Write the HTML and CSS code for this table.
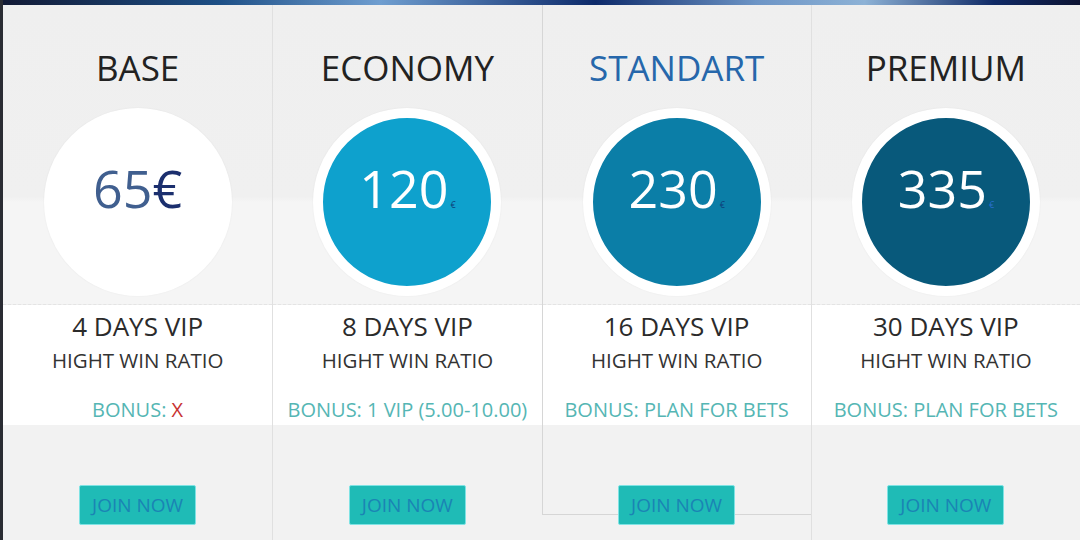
FILE: index.html
```html
<!DOCTYPE html>
<html lang="en">
<head>
  <meta charset="UTF-8" />
  <meta name="viewport" content="width=device-width, initial-scale=1.0"/>
  <title>VIP Plans</title>
  <link rel="stylesheet" href="styles.css">
</head>
<body>
  <div class="frame">
    <div class="plans">

      <div class="plan">
        <div class="plan-head">
          <h2 class="plan-title">BASE</h2>
          <div class="price price-base"><span class="amount">65<span class="cur">€</span></span></div>
        </div>
        <div class="plan-info">
          <div class="days">4 DAYS VIP</div>
          <div class="ratio">HIGHT WIN RATIO</div>
          <div class="bonus">BONUS: <span class="no">X</span></div>
        </div>
        <div class="plan-foot">
          <button class="join">JOIN NOW</button>
        </div>
      </div>

      <div class="plan">
        <div class="plan-head">
          <h2 class="plan-title">ECONOMY</h2>
          <div class="price price-economy"><span class="amount">120<span class="cur">€</span></span></div>
        </div>
        <div class="plan-info">
          <div class="days">8 DAYS VIP</div>
          <div class="ratio">HIGHT WIN RATIO</div>
          <div class="bonus">BONUS: 1 VIP (5.00-10.00)</div>
        </div>
        <div class="plan-foot">
          <button class="join">JOIN NOW</button>
        </div>
      </div>

      <div class="plan featured">
        <div class="plan-head">
          <h2 class="plan-title">STANDART</h2>
          <div class="price price-standart"><span class="amount">230<span class="cur">€</span></span></div>
        </div>
        <div class="plan-info">
          <div class="days">16 DAYS VIP</div>
          <div class="ratio">HIGHT WIN RATIO</div>
          <div class="bonus">BONUS: PLAN FOR BETS</div>
        </div>
        <div class="plan-foot">
          <button class="join">JOIN NOW</button>
        </div>
      </div>

      <div class="plan">
        <div class="plan-head">
          <h2 class="plan-title">PREMIUM</h2>
          <div class="price price-premium"><span class="amount">335<span class="cur">€</span></span></div>
        </div>
        <div class="plan-info">
          <div class="days">30 DAYS VIP</div>
          <div class="ratio">HIGHT WIN RATIO</div>
          <div class="bonus">BONUS: PLAN FOR BETS</div>
        </div>
        <div class="plan-foot">
          <button class="join">JOIN NOW</button>
        </div>
      </div>

    </div>
  </div>
</body>
</html>
```

FILE: styles.css
```css
html, body {
  margin: 0;
  padding: 0;
}
body {
  font-family: "Open Sans", "Liberation Sans", sans-serif;
  background: #f2f2f2;
  width: 1080px;
  height: 540px;
  overflow: hidden;
}
.frame {
  height: 540px;
  box-sizing: border-box;
  border-left: 3px solid #2a2c33;
  padding-top: 5px;
  background:
    linear-gradient(90deg, #121a35 0%, #1d4f86 20%, #6f9ed0 35%, #0d2a6a 55%, #6d95c6 70%, #8db2d6 80%, #102a66 92%, #0d1433 100%) top / 100% 5px no-repeat,
    #f2f2f2;
}
.plans {
  display: grid;
  grid-template-columns: repeat(4, 1fr);
  height: 535px;
}
.plan {
  display: flex;
  flex-direction: column;
  text-align: center;
  border-left: 1px solid #e0e0e0;
}
.plan:first-child { border-left: none; }
.plan.featured {
  border-left-color: #d6d6d6;
  border-bottom: 1px solid #d6d6d6;
  height: 510px;
  box-sizing: border-box;
}

/* head: title + price circle */
.plan-head {
  flex-shrink: 0;
  height: 300px;
  box-sizing: border-box;
  padding-top: 43px;
  display: flex;
  flex-direction: column;
  align-items: center;
  background: linear-gradient(#efefef 0%, #f0f0f0 64%, #f5f5f5 66%, #f5f5f5 100%);
  border-bottom: 1px dashed #e4e4e4;
}
.plan-title {
  margin: 0;
  font-size: 35px;
  font-weight: 400;
  line-height: 40px;
  color: #222;
}
.featured .plan-title { color: #2667ab; }

.price {
  margin-top: 20px;
  width: 188px;
  height: 188px;
  box-sizing: border-box;
  border-radius: 50%;
  border: 10px solid #fff;
  display: flex;
  align-items: center;
  justify-content: center;
  padding-bottom: 28px;
  box-shadow: 0 0 2px rgba(0,0,0,0.06);
}
.amount {
  font-size: 52px;
  line-height: 1;
  color: #fff;
}
.cur {
  font-size: 9px;
  color: #0e3c78;
  margin-left: 2px;
}
.price-base { background: #fff; }
.price-base .amount { color: #405f8f; }
.price-base .cur { font-size: 52px; color: #1b2f6e; margin-left: 0; }
.price-economy { background: #0ea1cd; }
.price-standart { background: #0b7ea7; }
.price-premium { background: #08597b; }
.price-premium .cur { color: #2a6fd0; }

/* white info band */
.plan-info {
  flex-shrink: 0;
  height: 120px;
  box-sizing: border-box;
  padding-top: 6px;
  background: #fff;
}
.days {
  font-size: 26px;
  line-height: 30px;
  color: #2b2b2b;
}
.ratio {
  margin-top: 7px;
  font-size: 20.5px;
  line-height: 24px;
  color: #333;
}
.bonus {
  margin-top: 26px;
  font-size: 20px;
  line-height: 24px;
  color: #55b6b4;
}
.bonus .no { color: #c83232; }

/* footer with button */
.plan-foot {
  padding-top: 60px;
}
.join {
  width: 117px;
  height: 40px;
  border: 1px solid #7fe3e4;
  border-radius: 2px;
  background: #1fbbb6;
  color: #1a84b4;
  font-family: "Open Sans", "Liberation Sans", sans-serif;
  font-size: 19px;
  padding: 0;
  cursor: pointer;
}
```
